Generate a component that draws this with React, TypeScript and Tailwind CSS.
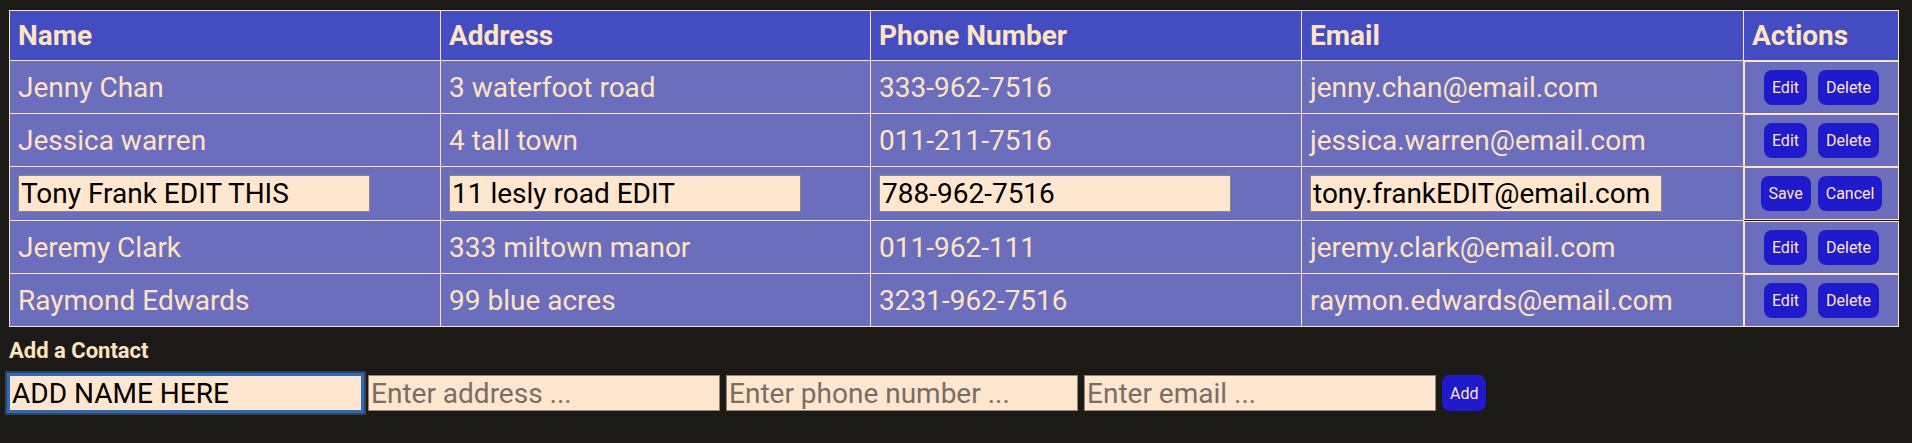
import React from "react";

type Contact = { name: string; address: string; phone: string; email: string };

const rows: (Contact & { editing?: boolean })[] = [
  { name: "Jenny Chan", address: "3 waterfoot road", phone: "333-962-7516", email: "jenny.chan@email.com" },
  { name: "Jessica warren", address: "4 tall town", phone: "011-211-7516", email: "jessica.warren@email.com" },
  { name: "Tony Frank EDIT THIS", address: "11 lesly road EDIT", phone: "788-962-7516", email: "tony.frankEDIT@email.com", editing: true },
  { name: "Jeremy Clark", address: "333 miltown manor", phone: "011-962-111", email: "jeremy.clark@email.com" },
  { name: "Raymond Edwards", address: "99 blue acres", phone: "3231-962-7516", email: "raymon.edwards@email.com" },
];

const btn =
  "bg-[#1f1acb] text-[#ffe4c4] text-[16px] leading-[normal] px-2 py-2 rounded-lg font-['Roboto',sans-serif]";

function EditInput({ value }: { value: string }) {
  return (
    <input
      defaultValue={value}
      className="w-[352px] h-[37px] bg-[#ffe6cf] border border-[#8f857c] text-black text-[28px] leading-[normal] px-[2px] py-px outline-none"
    />
  );
}

export default function App() {
  const headers = ["Name", "Address", "Phone Number", "Email"];
  return (
    <div className="min-h-screen bg-[#1c1a16] text-[#ffe4c4] font-['Roboto',sans-serif] pt-[10px] px-[9px]">
      <div className="grid grid-cols-[431px_430px_431px_442px_155px] w-[1890px] border-l border-t border-[#ffe4c4] text-[28px] leading-[normal]">
        {headers.map((h) => (
          <div key={h} className="bg-[#434cc0] font-bold px-2 py-2 border-r border-b border-[#ffe4c4]">
            {h}
          </div>
        ))}
        <div className="bg-[#434cc0] font-bold px-2 py-2 border-r border-b border-[#ffe4c4]">Actions</div>

        {rows.map((r, i) => (
          <React.Fragment key={i}>
            {[r.name, r.address, r.phone, r.email].map((v, j) =>
              r.editing ? (
                <div key={j} className="bg-[#6b6dbd] px-2 pt-2 pb-2 border-r border-b border-[#ffe4c4] flex items-center">
                  <EditInput value={v} />
                </div>
              ) : (
                <div key={j} className="bg-[#6b6dbd] px-2 py-2 border-r border-b border-[#ffe4c4] flex items-center">
                  {v}
                </div>
              )
            )}
            <div className="flex">
              <div
                className={
                  r.editing
                    ? "flex-1 mb-px bg-[#6b6dbd] border border-[#ffe4c4] px-2 flex items-center justify-center gap-[7px]"
                    : "flex-1 bg-[#6b6dbd] border border-[#ffe4c4] p-2 flex items-center justify-center gap-[11px]"
                }
              >
                {r.editing ? (
                  <>
                    <button className={btn}>Save</button>
                    <button className={btn}>Cancel</button>
                  </>
                ) : (
                  <>
                    <button className={btn}>Edit</button>
                    <button className={btn}>Delete</button>
                  </>
                )}
              </div>
            </div>
          </React.Fragment>
        ))}
      </div>

      <h3 className="mt-[11px] text-[22px] leading-[26px] font-bold">Add a Contact</h3>

      <div className="mt-[11px] flex gap-[6px] items-stretch">
        <input
          defaultValue="ADD NAME HERE"
          className="w-[353px] h-[36px] bg-[#ffe6cf] border border-[#2b6cbf] text-black text-[28px] leading-[normal] px-[2px] py-px outline-2 outline-solid outline-[#2b6cbf] shadow-[0_0_0_4px_#37434f]"
        />
        <input
          placeholder="Enter address ..."
          className="w-[352px] h-[36px] bg-[#ffe6cf] border border-[#8f857c] text-black text-[28px] leading-[normal] px-[2px] py-px outline-none placeholder:text-[#7a6e64]"
        />
        <input
          placeholder="Enter phone number ..."
          className="w-[352px] h-[36px] bg-[#ffe6cf] border border-[#8f857c] text-black text-[28px] leading-[normal] px-[2px] py-px outline-none placeholder:text-[#7a6e64]"
        />
        <input
          placeholder="Enter email ..."
          className="w-[352px] h-[36px] bg-[#ffe6cf] border border-[#8f857c] text-black text-[28px] leading-[normal] px-[2px] py-px outline-none placeholder:text-[#7a6e64]"
        />
        <button className={btn}>Add</button>
      </div>
    </div>
  );
}
